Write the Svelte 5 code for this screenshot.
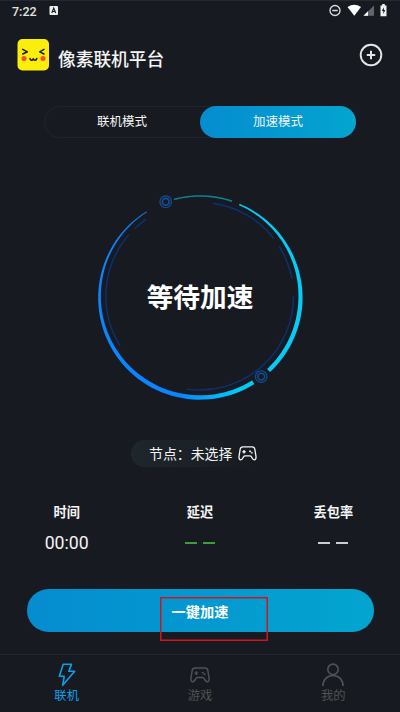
<script lang="ts">
	type Tab = { id: string; label: string };

	const modes: Tab[] = [
		{ id: 'link', label: '联机模式' },
		{ id: 'boost', label: '加速模式' }
	];

	const navItems: Tab[] = [
		{ id: 'link', label: '联机' },
		{ id: 'games', label: '游戏' },
		{ id: 'me', label: '我的' }
	];

	let mode = $state('boost');
	let page = $state('link');

	// angles are in degrees, clockwise from twelve o'clock
	function point(angle: number, r: number, cx = 105, cy = 105) {
		const a = (angle * Math.PI) / 180;
		return `${(cx + r * Math.sin(a)).toFixed(2)} ${(cy - r * Math.cos(a)).toFixed(2)}`;
	}

	function arc(from: number, to: number, r: number) {
		return `M${point(from, r, 104.7, 104.2)}A${r} ${r} 0 ${to - from > 180 ? 1 : 0} 1 ${point(to, r, 104.7, 104.2)}`;
	}

	// a ring segment whose width grows from w0 to w1 over the first part
	function taper(from: number, to: number, r: number, w0: number, w1: number) {
		const outer: string[] = [];
		const inner: string[] = [];
		for (let i = 0; i <= 60; i++) {
			const t = i / 60;
			const w = w0 + (w1 - w0) * Math.min(1, t * 1.6);
			const angle = from + (to - from) * t;
			outer.push(point(angle, r + w / 2));
			inner.unshift(point(angle, r - w / 2));
		}
		return `M${outer.join('L')}L${inner.join('L')}Z`;
	}

	const innerArcs = [
		[8, 52],
		[58, 79],
		[90, 188],
		[238, 311],
		[316, 325]
	];
</script>

{#snippet gamepad()}
	<svg class="pad" viewBox="0 0 20 16" fill="none" stroke="currentColor" stroke-width="1.4" stroke-linejoin="round">
		<path d="M5 1h10c1.600 0 2.500.8 2.800 2.300l1.200 7.400c.3 2.500-.3 3.900-1.700 4.100-2.800.3-2.100-4.300-4.600-4.300H7.300c-2.500 0-1.800 4.600-4.600 4.300C1.300 14.600.7 13.200 1 10.700l1.200-7.400C2.500 1.800 3.400 1 5 1z" />
		<path d="M6.300 4.300v3.600M4.500 6.100h3.600" />
		<path d="M12.200 5.600h1.100M14 7.300h1.100" stroke-linecap="round" />
	</svg>
{/snippet}

<div class="app">
	<div class="status">
		<span class="clock">7:22</span>
		<svg class="badge" viewBox="0 0 10 10">
			<rect x=".5" y="0" width="8.500" height="9" rx="1" fill="#eee" />
			<path d="M2.800 7L4.750 2.100L6.700 7M3.600 5.500h2.300" fill="none" stroke="#171b21" stroke-width="1.100" />
		</svg>
		<svg class="signals" viewBox="0 0 60 14">
			<circle cx="6" cy="6.500" r="5" fill="none" stroke="#ddd" stroke-width="1.300" />
			<path d="M3.300 6.500h5.400" stroke="#ddd" stroke-width="1.500" />
			<path d="M18.500 3Q25.300-1.500 32 3L25.300 11.700z" fill="#fff" />
			<path d="M34.500 11.700L45 1.500v10.200z" fill="#62656a" />
			<path d="M34.500 11.700L39 7.300v4.400z" fill="#fff" />
			<path d="M51.500 1.500h1.700V0h2.600v1.500h1.700v10.700h-6z" fill="#f2f2f2" />
			<path d="M54.900 3.200L52.800 7h1.500v3l2-4h-1.400z" fill="#171b21" />
		</svg>
	</div>

	<header>
		<svg class="logo" viewBox="0 0 32 32">
			<rect x=".5" width="31.500" height="31.500" rx="5" fill="#fcee0b" />
			<g fill="none" stroke="#1f1c05" stroke-width="1.500" stroke-linecap="round" stroke-linejoin="round">
				<path d="M5.700 10.300l4.700 2.500-4.700 2.200M27 10.300l-4.300 2.500L27 15" />
				<path d="M13 19.500c.4 2.200 2.800 2.200 3.300.3.600 1.900 3 1.900 3.500-.3" />
			</g>
			<circle cx="7" cy="19.500" r="2.500" fill="#fb4a38" />
			<circle cx="26" cy="19.500" r="2.500" fill="#fb4a38" />
		</svg>
		<h1>像素联机平台</h1>
		<button class="add" type="button" aria-label="添加">
			<svg viewBox="0 0 24 24" fill="none" stroke="#e6e6e6">
				<circle cx="12" cy="12" r="10.300" stroke-width="1.900" />
				<path d="M12 7.800v8.400M7.800 12h8.400" stroke-width="2" />
			</svg>
		</button>
	</header>

	<div class="modes">
		{#each modes as item (item.id)}
			<button type="button" class:active={mode === item.id} onclick={() => (mode = item.id)}>{item.label}</button>
		{/each}
	</div>

	<div class="dial">
		<svg viewBox="0 0 210 210" fill="none">
			<defs>
				<linearGradient id="ring" gradientUnits="userSpaceOnUse" x1="85" y1="0" x2="145" y2="0">
					<stop offset="0" stop-color="#0a84ff" />
					<stop offset="1" stop-color="#00ccf8" />
				</linearGradient>
			</defs>
			{#each innerArcs as [from, to]}
				<path d={arc(from, to, 93.8)} stroke="#0c3173" stroke-width="1.400" />
			{/each}
			<path d={taper(328, 148, 100.5, 0.9, 4.3)} fill="url(#ring)" />
			<path d={taper(23, 137, 100.5, 1.500, 4.300)} fill="#05cbf6" />
			<path d={taper(-15, 18.500, 101, 1.400, 1.600)} fill="#127f90" />
			<g stroke="#10509a">
				<circle cx="70.700" cy="9.700" r="5.800" stroke-width="1.200" />
				<circle cx="70.700" cy="9.700" r="3.400" stroke-width="1.700" />
				<circle cx="166.200" cy="184.600" r="5.800" stroke-width="1.100" />
				<circle cx="166.200" cy="184.600" r="3.400" stroke-width="1.500" />
			</g>
		</svg>
		<span>等待加速</span>
	</div>

	<button class="node" type="button"><span>节点：未选择</span>{@render gamepad()}</button>

	<div class="stats">
		<div class="stat">
			<span>时间</span>
			<b>00:00</b>
		</div>
		<div class="stat green">
			<span>延迟</span>
			<div class="dashes"><i></i><i></i></div>
		</div>
		<div class="stat">
			<span>丢包率</span>
			<div class="dashes"><i></i><i></i></div>
		</div>
	</div>

	<div class="start-wrap">
		<button class="start" type="button">一键加速</button>
		<div class="marker"></div>
	</div>

	<nav>
		{#each navItems as item (item.id)}
			<button type="button" class:active={page === item.id} onclick={() => (page = item.id)}>
				<span class="nav-icon">
					{#if item.id === 'link'}
						<svg viewBox="0 0 24 24" fill="none" stroke="currentColor" stroke-width="1.600" stroke-linejoin="round">
							<path d="M8.200 1.300h8.300l-2.700 6.900h5.900L7.700 22.300l1.500-9.100H4.300z" />
						</svg>
					{:else if item.id === 'games'}
						{@render gamepad()}
					{:else}
						<svg viewBox="0 0 24 24" fill="none" stroke="currentColor" stroke-width="1.600">
							<circle cx="12" cy="6.300" r="5.200" />
							<path d="M1.900 23c0-6.500 4.400-10.500 10.100-10.500S22.100 16.500 22.100 23" />
						</svg>
					{/if}
				</span>
				{item.label}
			</button>
		{/each}
	</nav>
</div>

<style>
	:global(body) {
		background: #171b21;
	}

	.app {
		display: flex;
		flex-direction: column;
		box-sizing: border-box;
		width: 400px;
		height: 712px;
		overflow: hidden;
		background: #171b21;
		border-top: 1px solid #25292f;
		color: #f4f4f4;
		font-family: Roboto, 'Noto Sans CJK SC', sans-serif;
	}

	button {
		padding: 0;
		border: 0;
		background: none;
		color: inherit;
		font-family: inherit;
	}

	svg {
		display: block;
		flex: none;
	}

	.status {
		display: flex;
		align-items: center;
		height: 20px;
		padding: 0 12px;
	}

	.clock {
		width: 37px;
		font-size: 12.5px;
		font-weight: 500;
		color: #e2e2e2;
	}

	.badge {
		width: 10px;
		height: 10px;
	}

	.signals {
		width: 60px;
		height: 14px;
		margin-left: auto;
		margin-right: -1px;
	}

	header {
		display: flex;
		align-items: center;
		height: 32px;
		margin-top: 18px;
		padding: 0 17px;
	}

	.logo {
		width: 32px;
		height: 32px;
	}

	h1 {
		flex: 1;
		margin: 9px 0 0 9px;
		font-size: 17.7px;
		font-weight: 500;
		line-height: 24px;
	}

	.add svg {
		width: 24px;
		height: 24px;
	}

	.modes {
		display: flex;
		box-sizing: border-box;
		width: 312px;
		height: 32px;
		margin: 35px auto 0;
		border: 1px solid #20252c;
		border-radius: 16px;
	}

	.modes button {
		flex: 1;
		margin: -1px;
		border-radius: 16px;
		font-size: 12.5px;
		line-height: 32px;
	}

	.modes button + button {
		margin-left: 1px;
	}

	.modes .active,
	.start {
		background: linear-gradient(90deg, #058cd0, #03a5cf);
	}

	.dial {
		display: grid;
		width: 210px;
		height: 210px;
		margin: 54px auto 0;
		place-items: center;
	}

	.dial svg,
	.dial span {
		grid-area: 1 / 1;
	}

	.dial svg {
		width: 210px;
		height: 210px;
	}

	.dial span {
		margin-top: 2px;
		font-size: 26.7px;
		font-weight: 700;
		line-height: 36px;
		color: #fff;
	}

	.node {
		display: flex;
		align-items: center;
		align-self: center;
		box-sizing: border-box;
		width: 138px;
		height: 27px;
		margin-top: 38px;
		padding-left: 18px;
		gap: 6px;
		border-radius: 14px;
		background: linear-gradient(90deg, #1f272c, #171b21 90%);
		font-size: 13.9px;
		white-space: nowrap;
	}

	.node span {
		margin-bottom: 2px;
	}

	.pad {
		width: 19px;
		height: 15px;
	}

	.stats {
		display: grid;
		grid-template-columns: repeat(3, 1fr);
		height: 65px;
		margin-top: 36px;
	}

	.stat {
		display: flex;
		flex-direction: column;
		align-items: center;
	}

	.stat span {
		font-size: 13.2px;
		font-weight: 700;
		line-height: 20px;
	}

	.stat b {
		margin-top: 8px;
		font-size: 17.7px;
		font-weight: 400;
		line-height: 24px;
	}

	.dashes {
		display: flex;
		gap: 6px;
		margin-top: 19px;
	}

	.dashes i {
		width: 12px;
		height: 2px;
		background: #cbcdcf;
	}

	.green i {
		background: #3e9c43;
	}

	.start-wrap {
		position: relative;
		margin: 21px 26.5px 0;
	}

	.start {
		display: block;
		width: 100%;
		height: 43px;
		border-radius: 22px;
		font-size: 14.2px;
		font-weight: 700;
		color: #fff;
	}

	.marker {
		position: absolute;
		top: 8px;
		left: 133.5px;
		box-sizing: border-box;
		width: 108px;
		height: 44px;
		border: 1px solid #d0161d;
		box-shadow: inset 0 0 0 0.5px #d0161d;
	}

	nav {
		display: grid;
		grid-template-columns: repeat(3, 1fr);
		margin-top: auto;
		height: 57px;
		border-top: 1px solid #23272d;
	}

	nav button {
		display: flex;
		flex-direction: column;
		align-items: center;
		padding-top: 8px;
		font-size: 12.3px;
		line-height: 18px;
		color: #505254;
	}

	nav .active {
		color: #0f9fe8;
	}

	.nav-icon {
		display: grid;
		height: 24px;
		place-items: center;
	}

	.nav-icon svg {
		width: 24px;
		height: 24px;
	}

	.nav-icon .pad {
		width: 20px;
		height: 16px;
	}
</style>
